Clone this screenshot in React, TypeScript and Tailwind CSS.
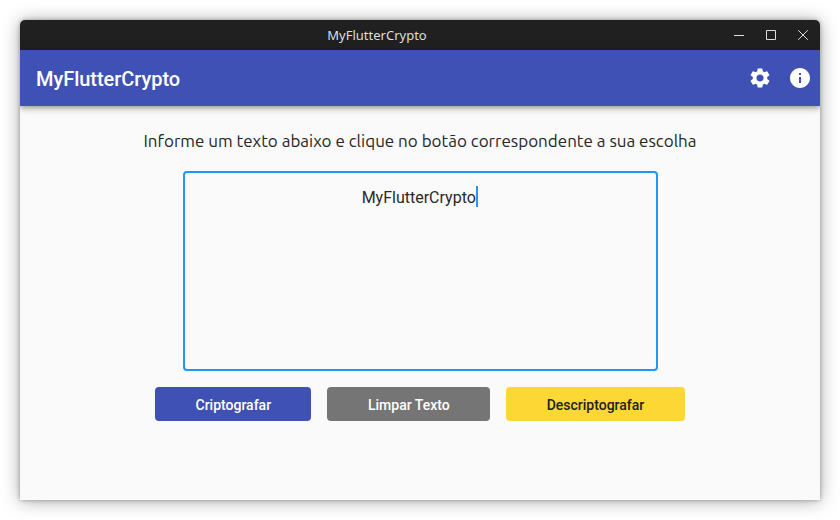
import React from "react";
import { MdSettings, MdInfo } from "react-icons/md";

function TitleBar() {
  return (
    <div className="flex h-[30px] items-center bg-[#202020] text-[#dedede]">
      <div className="w-[714px] text-center font-['Noto_Sans',sans-serif] text-[13px] leading-[30px]">MyFlutterCrypto</div>
      <svg className="h-[30px] w-[86px]" viewBox="0 0 86 30" fill="none" stroke="currentColor">
        <path d="M0 15.5h10" />
        <path d="M32.5 10.5h9v9h-9z" />
        <path d="M64.2 10.2l9.6 9.6M73.8 10.2l-9.6 9.6" />
      </svg>
    </div>
  );
}

export default function App() {
  return (
    <div className="h-[520px] w-[840px] overflow-hidden bg-white p-5 font-['Roboto',sans-serif]">
      <div className="flex h-[480px] flex-col overflow-hidden rounded-t-[5px] bg-[#fafafa] shadow-[0_0_4px_rgba(0,0,0,0.3),0_1px_18px_rgba(0,0,0,0.34)]">
        <TitleBar />
        <header className="z-10 flex h-14 shrink-0 items-center bg-[#3f51b5] pl-4 pr-2 text-white shadow-[0_2px_4px_-1px_rgba(0,0,0,0.2),0_4px_5px_rgba(0,0,0,0.14),0_1px_10px_rgba(0,0,0,0.12)]">
          <h1 className="flex-1 pt-[2px] text-[20px] font-medium tracking-[-0.04px]">MyFlutterCrypto</h1>
          <div className="flex gap-4">
            <MdSettings size={24} />
            <MdInfo size={24} />
          </div>
        </header>
        <main className="flex flex-col items-center pt-6">
          <p className="whitespace-nowrap font-['Ubuntu','Noto_Sans',sans-serif] text-[17px] leading-[22px] text-[#262626]">
            Informe um texto abaixo e clique no botão correspondente a sua escolha
          </p>
          <div className="mt-[19px] flex h-[200px] w-[475px] items-start justify-center rounded-[4px] border-2 border-[#2196f3] pt-[13px] text-[16px] leading-[24px] text-[#292929]">
            <span>MyFlutterCrypto</span>
            <span className="ml-[0.5px] h-[21px] w-[2px] bg-[#2196f3]" />
          </div>
          <div className="mt-4 flex gap-4 text-[14px] font-medium text-white">
            <button className="h-[34px] w-[156px] rounded bg-[#3f51b5] pt-[2px]">Criptografar</button>
            <button className="h-[34px] w-[163px] rounded bg-[#757575] pt-[2px]">Limpar Texto</button>
            <button className="h-[34px] w-[178.4px] rounded bg-[#fdd835] pt-[2px] text-[#212121]">Descriptografar</button>
          </div>
        </main>
      </div>
    </div>
  );
}
